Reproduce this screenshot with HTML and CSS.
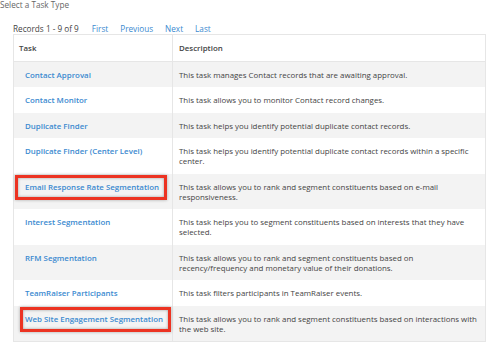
FILE: index.html
```html
<!DOCTYPE html>
<html lang="en">
<head>
    <meta charset="UTF-8">
    <title>Select a Task Type</title>
    <link rel="stylesheet" href="styles.css">
</head>
<body>
    <div class="page">
        <p class="title">Select a Task Type</p>

        <div class="pager">
            <span class="count">Records 1 - 9 of 9</span>
            <a href="#">First</a>
            <a href="#">Previous</a>
            <a href="#">Next</a>
            <a href="#">Last</a>
        </div>

        <table class="tasks">
            <thead>
                <tr>
                    <th class="col-task">Task</th>
                    <th>Description</th>
                </tr>
            </thead>
            <tbody>
                <tr>
                    <td class="col-task"><a href="#">Contact Approval</a></td>
                    <td>This task manages Contact records that are awaiting approval.</td>
                </tr>
                <tr>
                    <td class="col-task"><a href="#">Contact Monitor</a></td>
                    <td>This task allows you to monitor Contact record changes.</td>
                </tr>
                <tr>
                    <td class="col-task"><a href="#">Duplicate Finder</a></td>
                    <td>This task helps you identify potential duplicate contact records.</td>
                </tr>
                <tr>
                    <td class="col-task"><a href="#">Duplicate Finder (Center Level)</a></td>
                    <td>This task helps you identify potential duplicate contact records within a specific center.</td>
                </tr>
                <tr>
                    <td class="col-task"><a href="#" class="mark mark-wide">Email Response Rate Segmentation</a></td>
                    <td>This task allows you to rank and segment constituents based on e-mail responsiveness.</td>
                </tr>
                <tr>
                    <td class="col-task"><a href="#">Interest Segmentation</a></td>
                    <td>This task helps you to segment constituents based on interests that they have selected.</td>
                </tr>
                <tr>
                    <td class="col-task"><a href="#">RFM Segmentation</a></td>
                    <td>This task allows you to rank and segment constituents based on recency/frequency and monetary value of their donations.</td>
                </tr>
                <tr>
                    <td class="col-task"><a href="#">TeamRaiser Participants</a></td>
                    <td>This task filters participants in TeamRaiser events.</td>
                </tr>
                <tr>
                    <td class="col-task"><a href="#" class="mark mark-tight">Web Site Engagement Segmentation</a></td>
                    <td>This task allows you to rank and segment constituents based on interactions with the web site.</td>
                </tr>
            </tbody>
        </table>
    </div>
</body>
</html>
```

FILE: styles.css
```css
* {
    margin: 0;
    padding: 0;
    box-sizing: border-box;
}

body {
    font-family: "Open Sans", "DejaVu Sans", sans-serif;
    font-size: 7.9px;
    color: #444;
    background: #fff;
}

.page {
    padding: 0 14px 0 0;
}

.title {
    color: #666;
    font-size: 8.2px;
    line-height: 10px;
}

.pager {
    display: flex;
    align-items: center;
    gap: 12px;
    margin: 14px 0 0 13px;
    height: 10px;
    line-height: 10px;
    font-size: 8.2px;
}

.pager .count {
    color: #444;
    margin-right: 1px;
}

.pager a {
    color: #3b8ad0;
    text-decoration: none;
}

.tasks {
    margin: 0 0 0 13px;
    width: 473px;
    border-collapse: collapse;
    border: 1px solid #e6e6e6;
    table-layout: fixed;
}

.tasks th,
.tasks td {
    text-align: left;
    vertical-align: top;
    line-height: 10px;
    padding: 8px 6px 7.5px 6px;
    border-right: 1px solid #e6e6e6;
}

.tasks th {
    font-weight: 600;
    color: #444;
    background: #fff;
    border-bottom: 1px solid #e6e6e6;
}

.tasks .col-task {
    width: 159px;
    padding-left: 5px;
}

.tasks td.col-task {
    padding-left: 11px;
}

.tasks tbody tr:nth-child(odd) {
    background: #f3f3f3;
}

.tasks td a {
    color: #3b8ad0;
    font-weight: 600;
    text-decoration: none;
}

.mark {
    position: relative;
}

.mark::after {
    content: "";
    position: absolute;
    border: 3px solid #ec3322;
    box-shadow: inset 0 0 3px rgba(0, 0, 0, 0.35), 0 0 3px rgba(0, 0, 0, 0.3);
}

.mark-wide::after {
    top: -7px;
    bottom: -8px;
    left: -10px;
    right: -8px;
}

.mark-tight::after {
    top: -7px;
    bottom: -8px;
    left: -5px;
    right: -8px;
}
```
